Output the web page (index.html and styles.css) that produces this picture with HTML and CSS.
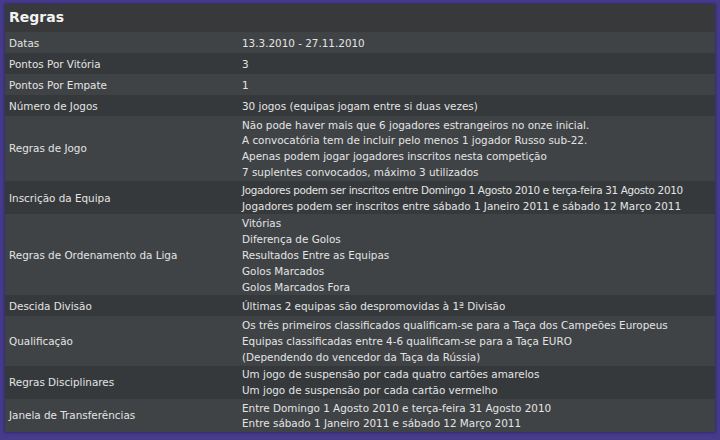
FILE: index.html
```html
<!DOCTYPE html>
<html lang="pt">
<head>
<meta charset="utf-8">
<link rel="stylesheet" href="styles.css">
</head>
<body>
<div class="frame">
  <div class="panel">
    <div class="title">Regras</div>
    <div class="row light"><div class="label">Datas</div><div class="value">13.3.2010 - 27.11.2010</div></div>
    <div class="row dark"><div class="label">Pontos Por Vitória</div><div class="value">3</div></div>
    <div class="row light"><div class="label">Pontos Por Empate</div><div class="value">1</div></div>
    <div class="row dark"><div class="label">Número de Jogos</div><div class="value">30 jogos (equipas jogam entre si duas vezes)</div></div>
    <div class="row light multi"><div class="label">Regras de Jogo</div><div class="value">Não pode haver mais que 6 jogadores estrangeiros no onze inicial.<br>A convocatória tem de incluir pelo menos 1 jogador Russo sub-22.<br>Apenas podem jogar jogadores inscritos nesta competição<br>7 suplentes convocados, máximo 3 utilizados</div></div>
    <div class="row dark multi"><div class="label">Inscrição da Equipa</div><div class="value"><span class="tight">Jogadores podem ser inscritos entre Domingo 1 Agosto 2010 e terça-feira 31 Agosto 2010</span><br>Jogadores podem ser inscritos entre sábado 1 Janeiro 2011 e sábado 12 Março 2011</div></div>
    <div class="row light multi"><div class="label">Regras de Ordenamento da Liga</div><div class="value">Vitórias<br>Diferença de Golos<br>Resultados Entre as Equipas<br>Golos Marcados<br>Golos Marcados Fora</div></div>
    <div class="row dark"><div class="label">Descida Divisão</div><div class="value">Últimas 2 equipas são despromovidas à 1ª Divisão</div></div>
    <div class="row light multi"><div class="label">Qualificação</div><div class="value">Os três primeiros classificados qualificam-se para a Taça dos Campeões Europeus<br>Equipas classificadas entre 4-6 qualificam-se para a Taça EURO<br>(Dependendo do vencedor da Taça da Rússia)</div></div>
    <div class="row dark multi"><div class="label">Regras Disciplinares</div><div class="value">Um jogo de suspensão por cada quatro cartões amarelos<br>Um jogo de suspensão por cada cartão vermelho</div></div>
    <div class="row light multi"><div class="label">Janela de Transferências</div><div class="value">Entre Domingo 1 Agosto 2010 e terça-feira 31 Agosto 2010<br>Entre sábado 1 Janeiro 2011 e sábado 12 Março 2011</div></div>
  </div>
</div>
</body>
</html>
```

FILE: styles.css
```css
html, body {
  margin: 0;
  padding: 0;
  background: #463a8a;
}
body {
  width: 720px;
  height: 440px;
  overflow: hidden;
  font-family: "DejaVu Sans", sans-serif;
  font-size: 10.4px;
  color: #e4e4e4;
}
.frame {
  padding: 4px 5px 5px 5px;
}
.panel {
  background: #3a3d3f;
  box-shadow: 0 0 3px rgba(20, 10, 50, 0.6);
}
.title {
  box-sizing: border-box;
  height: 28px;
  display: flex;
  align-items: center;
  padding: 0 0 2px 4px;
  font-size: 14px;
  font-weight: bold;
  color: #f2f2f2;
  background: #37393b;
}
.row {
  box-sizing: border-box;
  display: flex;
  align-items: center;
  min-height: 21px;
  padding-top: 2px;
  line-height: 15.9px;
  white-space: nowrap;
}
.row.multi {
  padding-top: 1.5px;
}
.row.light { background: #404346; }
.row.dark { background: #36393b; }
.label {
  width: 233px;
  padding-left: 4px;
  flex: none;
}
.value {
  flex: 1;
}
.tight {
  letter-spacing: -0.33px;
}
```
